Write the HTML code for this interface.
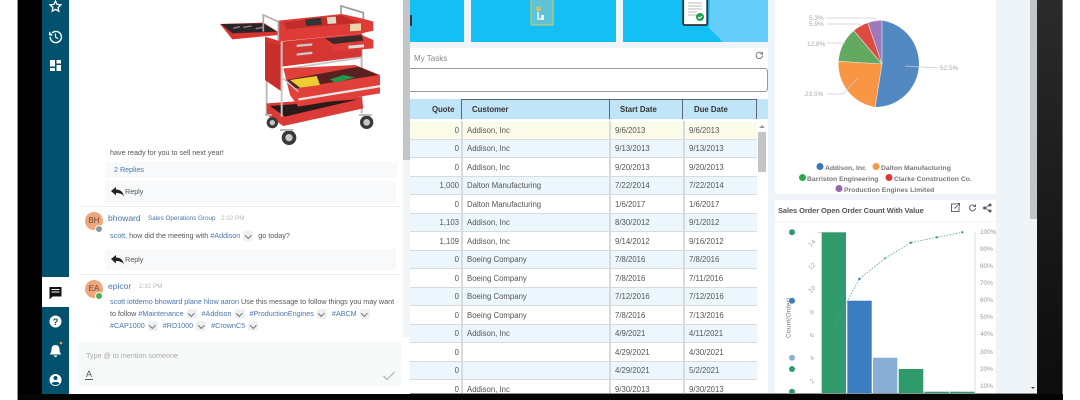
<!DOCTYPE html>
<html><head><meta charset="utf-8"><style>
html,body{margin:0;padding:0;width:1080px;height:400px;overflow:hidden;background:#fff;font-family:"Liberation Sans",sans-serif}
.a{position:absolute}
#s{position:absolute;left:0;top:0;width:1080px;height:400px;overflow:hidden;filter:blur(.35px)}
.t{position:absolute;white-space:nowrap;font-size:7.2px;line-height:10px;color:#555}
.l{color:#4a76ad}
.dd{display:inline-block;width:10px;height:10px;background:#eef0f1;border-radius:2px;vertical-align:middle;margin:0 3px 0 1px;position:relative}
.dd:after{content:"";position:absolute;left:2.5px;top:2px;width:3.5px;height:3.5px;border:solid #777;border-width:0 1px 1px 0;transform:rotate(45deg)}
.row{position:absolute;left:410px;width:347px;height:17px;border-bottom:1.5px solid #d8dadb}
.c{position:absolute;top:0;font-size:7.8px;line-height:17px;color:#555;white-space:nowrap}
.q{right:298px}.u{left:57px}.d1{left:205px}.d2{left:279px}
.sep{position:absolute;top:121px;width:1.5px;height:272px;background:#d8dadb}
.h{position:absolute;top:99px;height:20px;border-right:1.5px solid #5c6670;border-top:1px solid #5c6670;font-size:7.8px;font-weight:bold;line-height:20px;color:#333;box-sizing:border-box}
.pl{position:absolute;left:980px;font-size:6.4px;color:#999;line-height:8px}
.yl{position:absolute;font-size:6.5px;color:#aaa;transform:rotate(-45deg);line-height:8px}
</style></head><body><div id="s">

<div class="a" style="left:17px;top:0;width:1.5px;height:400px;background:#999"></div>
<div class="a" style="left:18px;top:0;width:24px;height:400px;background:#000"></div>
<div class="a" style="left:42px;top:0;width:27px;height:394px;background:#02526d"></div>
<div class="a" style="left:69px;top:0;width:341px;height:394px;background:#fff"></div>
<div class="a" style="left:42px;top:277px;width:27px;height:30px;background:#fff"></div>

<svg class="a" style="left:42px;top:0" width="27" height="394" viewBox="0 0 27 394">
<path d="M13.5 1l1.6 3.4 3.8.5-2.8 2.6.7 3.7-3.3-1.8-3.3 1.8.7-3.7-2.8-2.6 3.8-.5z" fill="none" stroke="#fff" stroke-width="1.3"/>
<path d="M8.2 37a5.6 5.6 0 1 0 1.7-4" fill="none" stroke="#fff" stroke-width="1.4"/><path d="M7 31.5v4h4z" fill="#fff"/><path d="M13.5 33.5v3.500l2.500 1.500" fill="none" stroke="#fff" stroke-width="1.200"/>
<path d="M8 60h5v6.500H8zM14.500 60H19v3.500h-4.500zM8 68h5v3H8zM14.500 65H19v6h-4.500z" fill="#fff"/>
<path d="M7.500 287h12v9.500h-9l-3 3z" fill="#111"/><path d="M9.500 289.500h8M9.500 292h8" stroke="#fff" stroke-width="1"/>
<circle cx="13.500" cy="321.500" r="6" fill="#fff"/><text x="13.500" y="325" font-size="9" font-weight="bold" text-anchor="middle" fill="#02526d" font-family="Liberation Sans">?</text>
<path d="M13.500 345c-3 0-4 2-4 4.500 0 2.500-1.500 4-1.500 5h11c0-1-1.500-2.500-1.500-5 0-2.500-1-4.500-4-4.500zM11.800 355.500h3.400c0 2-3.400 2-3.400 0z" fill="#fff"/><circle cx="19" cy="343" r="1.300" fill="#f0a030"/>
<circle cx="13.500" cy="380" r="6" fill="#fff"/><circle cx="13.500" cy="378" r="2" fill="#02526d"/><path d="M9.500 383.500c1-2.200 7-2.200 8 0-2 2-6 2-8 0z" fill="#02526d"/>
</svg>

<!-- cart -->
<svg class="a" style="left:215px;top:0" width="170" height="150" viewBox="0 0 510 450">
<path d="M155 120V345M440 100V340" stroke="#bdbdbd" stroke-width="6" fill="none"/>
<path d="M378 50V18L445 38V60" fill="none" stroke="#999" stroke-width="5"/>
<path d="M155 310L440 290L445 325L205 378L155 345z" fill="#db3a36"/>
<path d="M165 318L430 298L210 350z" fill="#2a1a1a"/>
<path d="M150 110L200 125L440 100V170L200 200V275L150 240z" fill="#d63632"/>
<path d="M150 125L195 135V270L150 240z" fill="#c72f2c"/>
<path d="M190 62L380 42L440 55L475 65V92L440 100L190 125z" fill="#df3b37"/>
<path d="M205 68L380 46L435 68L215 88z" fill="#c22c28"/>
<path d="M270 58L318 53L320 74L274 78z" fill="#333"/>
<path d="M335 52L362 50L364 70L338 72z" fill="#e4dcc8"/>
<path d="M405 72L438 70L438 92L405 94z" fill="#eed6a8"/>
<path d="M245 134L292 130V137L245 141zM245 160L292 155V162L245 167zM208 205L438 170V176L208 210z" fill="#c8c8c8"/>
<path d="M330 115L440 105L475 120V145L360 155z" fill="#df3b37"/>
<path d="M330 115L440 105L445 122L355 132z" fill="#3a2a2a"/>
<path d="M400 137L447 133V142L400 146z" fill="#ddd"/>
<path d="M15 72L145 68L190 96V105L52 118z" fill="#d93430"/>
<path d="M18 72L145 70L185 95L52 100z" fill="#2c2426"/>
<path d="M55 85L75 80M85 82L110 78M122 86L145 82" stroke="#888" stroke-width="4"/>
<path d="M145 95V45L190 65V120" fill="none" stroke="#aaa" stroke-width="5"/>
<path d="M205 205L420 195L495 225V280L250 320L225 285z" fill="#e03f3a"/>
<path d="M215 240L430 200L490 225L240 265z" fill="#5a2020"/>
<path d="M225 240L305 228L315 255L255 263z" fill="#ecce34"/>
<path d="M345 238L385 225L420 232L360 248z" fill="#1f9a4c"/>
<path d="M250 295L495 255V262L250 302z" fill="#e6e6e6"/>
<path d="M200 125V350" stroke="#c8c8c8" stroke-width="6" fill="none"/>
<path d="M205 235L250 275" stroke="#bbb" stroke-width="5"/>
<g fill="#3a3a3a"><circle cx="172" cy="368" r="17"/><circle cx="455" cy="367" r="20"/><circle cx="222" cy="413" r="22"/></g>
<g fill="#c8c8c8"><circle cx="172" cy="368" r="8"/><circle cx="455" cy="367" r="10"/><circle cx="222" cy="413" r="11"/></g>
<path d="M195 390H235M432 345H470M150 345H170" stroke="#bbb" stroke-width="6"/>
</svg>

<!-- chat -->
<div class="t" style="left:110px;top:148px">have ready for you to sell next year!</div>
<div class="a" style="left:105px;top:162px;width:292px;height:16px;background:#f8f9fa"></div>
<div class="t l" style="left:114px;top:165px">2 Replies</div>
<div class="a" style="left:105px;top:181px;width:291px;height:23px;background:#f8f9fa"></div>
<svg class="a" style="left:111px;top:187px" width="13" height="10"><path d="M0 4l5-4v2.500c4 0 7 2 8 7-1.500-2.500-4-3.500-8-3.500V8.500z" fill="#222"/></svg>
<div class="t" style="left:125px;top:187px">Reply</div>
<div class="a" style="left:79px;top:206px;width:321px;height:1px;background:#eceeef"></div>

<div class="a" style="left:85px;top:212px;width:18px;height:18px;border-radius:50%;background:#efa77c;font-size:8px;line-height:18px;text-align:center;color:#6a4a3a">BH</div>
<div class="a" style="left:95px;top:225px;width:6px;height:6px;border-radius:50%;background:#8d949a;border:.5px solid #fff"></div>
<div class="t l" style="left:108px;top:213px;font-size:8.500px">bhoward</div>
<div class="t l" style="left:148px;top:214px;font-size:6.300px">Sales Operations Group</div>
<div class="t" style="left:221px;top:214px;font-size:6.300px;color:#b5b9bc">2:32 PM</div>
<div class="t" style="left:110px;top:231px"><span class="l">scott,</span> how did the meeting with <span class="l">#Addison</span> <span class="dd"></span> go today?</div>
<div class="a" style="left:105px;top:249px;width:291px;height:21px;background:#f8f9fa"></div>
<svg class="a" style="left:111px;top:255px" width="13" height="10"><path d="M0 4l5-4v2.500c4 0 7 2 8 7-1.500-2.500-4-3.500-8-3.500V8.500z" fill="#222"/></svg>
<div class="t" style="left:125px;top:255px">Reply</div>
<div class="a" style="left:79px;top:274px;width:321px;height:1px;background:#eceeef"></div>

<div class="a" style="left:85px;top:280px;width:18px;height:18px;border-radius:50%;background:#efa77c;font-size:8px;line-height:18px;text-align:center;color:#6a4a3a">EA</div>
<div class="a" style="left:95px;top:292px;width:6px;height:6px;border-radius:50%;background:#4cb050;border:.5px solid #fff"></div>
<div class="t l" style="left:108px;top:281px;font-size:8.500px">epicor</div>
<div class="t" style="left:139px;top:282px;font-size:6.300px;color:#b5b9bc">2:32 PM</div>
<div class="t" style="left:110px;top:297px"><span class="l">scott iotdemo bhoward plane hlow aaron</span> Use this message to follow things you may want</div>
<div class="t" style="left:110px;top:309px">to follow <span class="l">#Maintenance</span> <span class="dd"></span> <span class="l">#Addison</span> <span class="dd"></span> <span class="l">#ProductionEngines</span> <span class="dd"></span> <span class="l">#ABCM</span> <span class="dd"></span></div>
<div class="t" style="left:110px;top:321px"><span class="l">#CAP1000</span> <span class="dd"></span> <span class="l">#RD1000</span> <span class="dd"></span> <span class="l">#CrownC5</span> <span class="dd"></span></div>

<div class="a" style="left:78px;top:342px;width:323px;height:44px;background:#f7f8f8"></div>
<div class="t" style="left:86px;top:351px;color:#aaa;font-size:7.200px">Type @ to mention someone</div>
<div class="a" style="left:85px;top:370px;font-size:9px;line-height:9px;color:#555;border-bottom:1px solid #555;padding:0 1px">A</div>
<svg class="a" style="left:383px;top:371px" width="12" height="9"><path d="M.5 5l3.500 3.500L11.500 1" fill="none" stroke="#aaa" stroke-width="1"/></svg>

<!-- main bg -->
<div class="a" style="left:410px;top:0;width:627px;height:394px;background:#eef4f8"></div>
<div class="a" style="left:410px;top:0;width:54px;height:42px;background:#14bff5"></div>
<div class="a" style="left:410px;top:15px;width:1.500px;height:11px;background:#333;border-radius:0 1px 1px 0"></div>
<div class="a" style="left:471px;top:0;width:145px;height:42px;background:#14bff5"></div>
<div class="a" style="left:623px;top:0;width:145px;height:42px;background:#14bff5"></div>
<svg class="a" style="left:623px;top:0" width="145" height="42"><path d="M87 0h58v42H100l-14-14z" fill="#64cdf8"/></svg>
<svg class="a" style="left:530px;top:0" width="24" height="27"><rect x="1" y="-3" width="22" height="28" fill="#5fc3d8" stroke="#c9c66a" stroke-width="1.200"/><circle cx="8.500" cy="9" r="2.500" fill="#c9c66a"/><path d="M8 12v7h5" fill="none" stroke="#e8f4f8" stroke-width="1.500"/><rect x="11" y="15" width="3" height="5" fill="#fff"/></svg>
<svg class="a" style="left:682px;top:0" width="28" height="27"><rect x="1.200" y="-3" width="24" height="28" rx="1.500" fill="#fff" stroke="#333" stroke-width="1.800"/><path d="M6 3h14M6 6h14M6 9h14M6 12h9M6 15h9" stroke="#bbb" stroke-width="1"/><circle cx="18" cy="17" r="4" fill="#1ca04a"/><path d="M16 17l1.500 1.500 2.500-2.500" fill="none" stroke="#fff" stroke-width="1"/></svg>

<!-- tasks panel -->
<div class="a" style="left:410px;top:48px;width:358px;height:345px;background:#fff"></div>
<div class="t" style="left:414px;top:54px;font-size:8px;color:#888">My Tasks</div>
<svg class="a" style="left:755px;top:51px" width="9" height="9"><path d="M7.500 4.500a3.200 3.200 0 1 1-1-2.400" fill="none" stroke="#777" stroke-width="1"/><path d="M8 .5v3H5z" fill="#777"/></svg>
<div class="a" style="left:410px;top:68px;width:358px;height:24px;box-sizing:border-box;border:1.500px solid #999;border-radius:0 3px 3px 0;background:#fff;border-left:0"></div>

<div class="a" style="left:410px;top:99px;width:358px;height:20px;background:#c0e4f8"></div>
<div class="h" style="left:410px;width:51.500px;text-align:right;padding-right:6px;border-top-color:#c0e4f8">Quote</div>
<div class="h" style="left:461px;width:148.500px;padding-left:11px">Customer</div>
<div class="h" style="left:609px;width:74px;padding-left:11px">Start Date</div>
<div class="h" style="left:683px;width:74px;padding-left:11px">Due Date</div>

<div class="row" style="top:121.500px;background:#fbfbe9"><span class="c q">0</span><span class="c u">Addison, Inc</span><span class="c d1">9/6/2013</span><span class="c d2">9/6/2013</span></div>
<div class="row" style="top:140px;background:#ecf7fd"><span class="c q">0</span><span class="c u">Addison, Inc</span><span class="c d1">9/13/2013</span><span class="c d2">9/13/2013</span></div>
<div class="row" style="top:158.500px;background:#fff"><span class="c q">0</span><span class="c u">Addison, Inc</span><span class="c d1">9/20/2013</span><span class="c d2">9/20/2013</span></div>
<div class="row" style="top:177px;background:#ecf7fd"><span class="c q">1,000</span><span class="c u">Dalton Manufacturing</span><span class="c d1">7/22/2014</span><span class="c d2">7/22/2014</span></div>
<div class="row" style="top:195.500px;background:#fff"><span class="c q">0</span><span class="c u">Dalton Manufacturing</span><span class="c d1">1/6/2017</span><span class="c d2">1/6/2017</span></div>
<div class="row" style="top:214px;background:#ecf7fd"><span class="c q">1,103</span><span class="c u">Addison, Inc</span><span class="c d1">8/30/2012</span><span class="c d2">9/1/2012</span></div>
<div class="row" style="top:232.500px;background:#fff"><span class="c q">1,109</span><span class="c u">Addison, Inc</span><span class="c d1">9/14/2012</span><span class="c d2">9/16/2012</span></div>
<div class="row" style="top:251px;background:#ecf7fd"><span class="c q">0</span><span class="c u">Boeing Company</span><span class="c d1">7/8/2016</span><span class="c d2">7/8/2016</span></div>
<div class="row" style="top:269.500px;background:#fff"><span class="c q">0</span><span class="c u">Boeing Company</span><span class="c d1">7/8/2016</span><span class="c d2">7/11/2016</span></div>
<div class="row" style="top:288px;background:#ecf7fd"><span class="c q">0</span><span class="c u">Boeing Company</span><span class="c d1">7/12/2016</span><span class="c d2">7/12/2016</span></div>
<div class="row" style="top:306.500px;background:#fff"><span class="c q">0</span><span class="c u">Boeing Company</span><span class="c d1">7/8/2016</span><span class="c d2">7/13/2016</span></div>
<div class="row" style="top:325px;background:#ecf7fd"><span class="c q">0</span><span class="c u">Addison, Inc</span><span class="c d1">4/9/2021</span><span class="c d2">4/11/2021</span></div>
<div class="row" style="top:343.500px;background:#fff"><span class="c q">0</span><span class="c d1">4/29/2021</span><span class="c d2">4/30/2021</span></div>
<div class="row" style="top:362px;background:#ecf7fd"><span class="c q">0</span><span class="c d1">4/29/2021</span><span class="c d2">5/2/2021</span></div>
<div class="row" style="top:380.500px;background:#fff"><span class="c q">0</span><span class="c u">Addison, Inc</span><span class="c d1">9/30/2013</span><span class="c d2">9/30/2013</span></div>
<div class="sep" style="left:461px"></div><div class="sep" style="left:609px"></div><div class="sep" style="left:683px"></div>
<div class="a" style="left:758px;top:132px;width:8px;height:40px;background:#c2c4c6"></div>
<div class="a" style="left:759px;top:125px;width:0;height:0;border:3px solid transparent;border-bottom-color:#999;border-top:0"></div>

<!-- chat scrollbar sits over the main area edge -->
<div class="a" style="left:403px;top:160px;width:7px;height:177px;background:#f4f5f6"></div>
<div class="a" style="left:403px;top:0;width:7px;height:160px;background:#c3c6c9"></div>

<!-- pie panel -->
<div class="a" style="left:775px;top:0;width:221px;height:194px;background:#fff"></div>
<svg class="a" style="left:775px;top:0" width="221" height="194" viewBox="775 0 221 194">
<path d="M882 64V20.500A43.500 43.500 0 0 1 875.200 107z" fill="#5389c2"/>
<path d="M882 64L875.200 107A43.500 43.500 0 0 1 838.600 61.300z" fill="#f89643"/>
<path d="M882 64L838.600 61.300A43.500 43.500 0 0 1 853.900 30.800z" fill="#63a95f"/>
<path d="M882 64L853.900 30.800A43.500 43.500 0 0 1 867.800 22.900z" fill="#dc4a40"/>
<path d="M882 64L867.800 22.900A43.500 43.500 0 0 1 882 20.500z" fill="#a079bb"/>
<path d="M882 64V20.500M882 64L875.200 107M882 64L838.600 61.300M882 64L853.900 30.800M882 64L867.800 22.900" stroke="#eee" stroke-width=".6"/>
<path d="M827 18h48l1 4M827 24h32l3 3M827 43h18M827 94h16l15-16M905 66l33 2" fill="none" stroke="#ccc" stroke-width=".7"/>
<g font-size="6.500" fill="#a8a8a8" font-family="Liberation Sans"><text x="809" y="20">5.3%</text><text x="809" y="26">5.9%</text><text x="807" y="46">12.8%</text><text x="805" y="96">23.5%</text><text x="940" y="70">52.5%</text></g>
<g font-size="6.800" fill="#777" font-weight="bold" font-family="Liberation Sans">
<circle cx="820" cy="166.500" r="3.500" fill="#3578bd"/><text x="825" y="170">Addison, Inc</text>
<circle cx="876" cy="166.500" r="3.500" fill="#f89643"/><text x="881" y="170">Dalton Manufacturing</text>
<circle cx="802.500" cy="177.500" r="3.500" fill="#2ba84a"/><text x="807" y="181">Barriston Engineering</text>
<circle cx="889" cy="177.500" r="3.500" fill="#dc3c38"/><text x="894" y="181">Clarke Construction Co.</text>
<circle cx="839" cy="188.500" r="3.500" fill="#9565b0"/><text x="844" y="192">Production Engines Limited</text>
</g></svg>

<!-- pareto panel -->
<div class="a" style="left:775px;top:200px;width:221px;height:194px;background:#fff"></div>
<div class="a" style="left:775px;top:200px;width:221px;height:21px;background:#fff;border-bottom:1px solid #f2f4f5"></div>
<div class="t" style="left:778px;top:206px;font-size:7.500px;color:#555;font-weight:bold;letter-spacing:-.1px">Sales Order Open Order Count With Value</div>
<svg class="a" style="left:950px;top:202px" width="44" height="12"><path d="M6 2H1.500v7.500H9V5M4.500 6.500L9 2M6.500 1.500H9.500V4.500" fill="none" stroke="#666" stroke-width="1"/><path d="M25.500 6a3 3 0 1 1-1-2.300" fill="none" stroke="#666" stroke-width="1"/><path d="M26 2v3h-3z" fill="#666"/><circle cx="34.500" cy="6" r="1.500" fill="#555"/><circle cx="40" cy="3" r="1.500" fill="#555"/><circle cx="40" cy="9" r="1.500" fill="#555"/><path d="M34.500 6L40 3M34.500 6L40 9" stroke="#555" stroke-width=".8"/></svg>
<svg class="a" style="left:775px;top:222px" width="221" height="172" viewBox="775 222 221 172">
<rect x="821.700" y="232.300" width="24.300" height="162" fill="#2f9b6b"/>
<rect x="847.300" y="300.700" width="24.400" height="94" fill="#3a7dc0"/>
<rect x="873" y="357.700" width="24.300" height="37" fill="#8aafd6"/>
<rect x="898.700" y="369" width="24.600" height="25" fill="#2f9b6b"/>
<rect x="924.300" y="391.700" width="24.700" height="3" fill="#2f9b6b"/>
<rect x="950" y="391.700" width="24.700" height="3" fill="#2f9b6b"/>
<path d="M818 232.300h4" stroke="#bbb" stroke-width=".7"/>
<path d="M975 232v162" stroke="#ddd" stroke-width="1"/>
<path d="M834 325.700L859.300 279L885 258.300L910.700 242.700L936.700 237.300L962.300 232.300" fill="none" stroke="#4fa58a" stroke-width=".8" stroke-dasharray="1.500 1.500"/>
<g fill="#3a9a72"><circle cx="910.700" cy="242.700" r="1.200"/><circle cx="936.700" cy="237.300" r="1.200"/><circle cx="962.300" cy="232.300" r="1.200"/></g>
<circle cx="859.300" cy="279" r="1.200" fill="#3a7dc0"/><circle cx="885" cy="258.300" r="1.200" fill="#8aafd6"/>
<g><circle cx="792" cy="232.300" r="3" fill="#2f9b6b"/><circle cx="792" cy="300.700" r="3" fill="#3a7dc0"/><circle cx="792" cy="357.700" r="3" fill="#8aafd6"/><circle cx="792" cy="369" r="3" fill="#2f9b6b"/><circle cx="792" cy="391.700" r="3" fill="#2f9b6b"/></g>
<text x="0" y="0" font-size="6.800" fill="#777" font-family="Liberation Sans" text-anchor="middle" transform="translate(790.500 318) rotate(-90)">Count(Order)</text>
</svg>
<div class="pl" style="top:229px">100%</div><div class="pl" style="top:246px">90%</div><div class="pl" style="top:263px">80%</div><div class="pl" style="top:280px">70%</div><div class="pl" style="top:297px">60%</div><div class="pl" style="top:314px">50%</div><div class="pl" style="top:331px">40%</div><div class="pl" style="top:349px">30%</div><div class="pl" style="top:366px">20%</div><div class="pl" style="top:383px">10%</div>
<div class="yl" style="left:809px;top:240px">14</div><div class="yl" style="left:809px;top:263px">12</div><div class="yl" style="left:809px;top:286px">10</div><div class="yl" style="left:811px;top:309px">8</div><div class="yl" style="left:811px;top:332px">6</div><div class="yl" style="left:811px;top:355px">4</div><div class="yl" style="left:811px;top:378px">2</div>

<!-- right edge scrollbar -->
<div class="a" style="left:1030px;top:0;width:7px;height:394px;background:#f0f3f5"></div>
<div class="a" style="left:1030px;top:0;width:7px;height:219px;background:#c2c4c6"></div>
<div class="a" style="left:1031px;top:387px;width:0;height:0;border:2.500px solid transparent;border-top-color:#444;border-bottom:0"></div>
<!-- bezel -->
<div class="a" style="left:1037px;top:0;width:25px;height:400px;background:linear-gradient(#2b2b2b,#181818 60%,#0c0c0c)"></div>
<div class="a" style="left:1062px;top:0;width:1px;height:400px;background:#777"></div>
<div class="a" style="left:18px;top:394px;width:1045px;height:6px;background:#050505"></div>
<div class="a" style="left:410px;top:393px;width:627px;height:1px;background:#8a9298"></div>
</div></body></html>
